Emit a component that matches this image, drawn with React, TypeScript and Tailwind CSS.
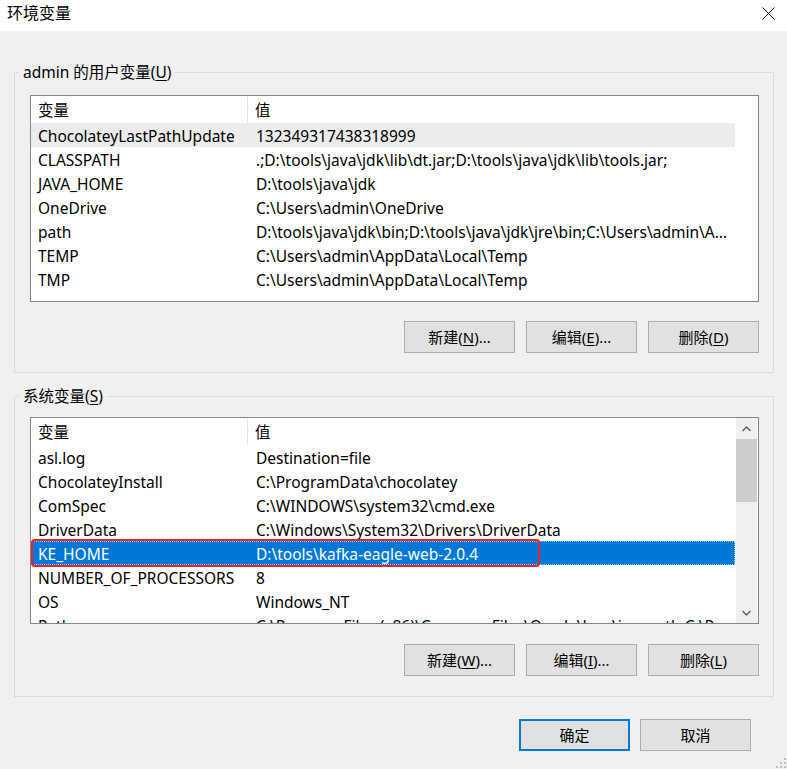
import React from "react";

type Row = { name: string; value: string };

const userVars: Row[] = [
  { name: "ChocolateyLastPathUpdate", value: "132349317438318999" },
  { name: "CLASSPATH", value: ".;D:\\tools\\java\\jdk\\lib\\dt.jar;D:\\tools\\java\\jdk\\lib\\tools.jar;" },
  { name: "JAVA_HOME", value: "D:\\tools\\java\\jdk" },
  { name: "OneDrive", value: "C:\\Users\\admin\\OneDrive" },
  { name: "path", value: "D:\\tools\\java\\jdk\\bin;D:\\tools\\java\\jdk\\jre\\bin;C:\\Users\\admin\\AppData\\Local\\Microsoft\\WindowsApps" },
  { name: "TEMP", value: "C:\\Users\\admin\\AppData\\Local\\Temp" },
  { name: "TMP", value: "C:\\Users\\admin\\AppData\\Local\\Temp" },
];

const sysVars: Row[] = [
  { name: "asl.log", value: "Destination=file" },
  { name: "ChocolateyInstall", value: "C:\\ProgramData\\chocolatey" },
  { name: "ComSpec", value: "C:\\WINDOWS\\system32\\cmd.exe" },
  { name: "DriverData", value: "C:\\Windows\\System32\\Drivers\\DriverData" },
  { name: "KE_HOME", value: "D:\\tools\\kafka-eagle-web-2.0.4" },
  { name: "NUMBER_OF_PROCESSORS", value: "8" },
  { name: "OS", value: "Windows_NT" },
  { name: "Path", value: "C:\\Program Files (x86)\\Common Files\\Oracle\\Java\\javapath;C:\\Program Files" },
];

const Btn = ({ label, keyChar, tail, primary }: { label: string; keyChar?: string; tail?: string; primary?: boolean }) => (
  <button
    className={`w-[111px] h-[32px] bg-[#e1e1e1] text-[15px] text-black flex items-center justify-center ${
      primary ? "border-2 border-[#0078d7]" : "border border-[#adadad]"
    }`}
  >
    {label}
    {keyChar && (
      <>
        (<span className="underline underline-offset-2">{keyChar}</span>){tail}
      </>
    )}
  </button>
);

const Header = () => (
  <div className="flex h-[27px] w-[704px] items-center bg-white">
    <div className="w-[217px] pl-[7px] pt-[2px] border-r border-[#e5e5e5] h-full flex items-center">变量</div>
    <div className="pl-[7px] pt-[2px]">值</div>
  </div>
);

const ListRow = ({ row, hovered, selected }: { row: Row; hovered?: boolean; selected?: boolean }) => (
  <div
    className={`flex h-[24px] w-[704px] items-center pt-[3px] ${
      selected
        ? "bg-[#0078d7] text-white outline-1 outline-dotted outline-offset-[-1px] outline-[#9ccbf0]"
        : hovered
        ? "bg-[#ececec]"
        : ""
    }`}
  >
    <div className="w-[217px] pl-[7px] whitespace-nowrap">{row.name}</div>
    <div className="w-[487px] pl-[8px] pr-[8px] overflow-hidden text-ellipsis whitespace-nowrap">{row.value}</div>
  </div>
);

const Chevron = ({ up }: { up?: boolean }) => (
  <svg width="9" height="6" viewBox="0 0 9 6">
    <path d={up ? "M0.5 5 L4.5 1 L8.5 5" : "M0.5 1 L4.5 5 L8.5 1"} fill="none" stroke="#606060" strokeWidth="1.4" />
  </svg>
);

const App = () => {
  return (
    <div
      className="w-[787px] h-[769px] bg-[#f0f0f0] text-black text-[15.5px] relative overflow-hidden"
      style={{ fontFamily: '"Noto Sans", "Noto Sans CJK SC", sans-serif' }}
    >
      {/* title bar */}
      <div className="h-[31px] bg-white flex items-start justify-between">
        <div className="pl-[7px] pt-[3px] leading-[20px] text-[16px]">环境变量</div>
        <div className="pt-[7px] pr-[12px]">
          <svg width="13" height="13" viewBox="0 0 13 13">
            <path d="M0.5 0.5 L12.5 12.5 M12.5 0.5 L0.5 12.5" stroke="#111" strokeWidth="1" />
          </svg>
        </div>
      </div>

      {/* user vars */}
      <fieldset className="ml-[14px] mt-[32px] w-[760px] border border-[#dcdcdc] pb-[19px]">
        <legend className="ml-[4px] px-[4px] leading-[18px]">
          admin 的用户变量(<span className="underline underline-offset-2">U</span>)
        </legend>
        <div className="ml-[15px] mt-[14px] w-[729px] h-[207px] border border-[#828790] bg-white overflow-hidden">
          <Header />
          {userVars.map((r, i) => (
            <ListRow key={r.name} row={r} hovered={i === 0} />
          ))}
        </div>
        <div className="flex ml-[389px] mt-[19px] gap-[11px]">
          <Btn label="新建" keyChar="N" tail="..." />
          <Btn label="编辑" keyChar="E" tail="..." />
          <Btn label="删除" keyChar="D" />
        </div>
      </fieldset>

      {/* system vars */}
      <fieldset className="ml-[14px] mt-[14px] w-[760px] border border-[#dcdcdc] pb-[20px]">
        <legend className="ml-[4px] px-[4px] leading-[18px]">
          系统变量(<span className="underline underline-offset-2">S</span>)
        </legend>
        <div className="ml-[15px] mt-[12px] w-[729px] h-[207px] border border-[#828790] bg-white flex overflow-hidden">
          <div className="w-[705px] h-full overflow-hidden relative">
            <Header />
            {sysVars.map((r) => (
              <ListRow key={r.name} row={r} selected={r.name === "KE_HOME"} />
            ))}
            <div className="absolute left-[0px] top-[121px] w-[509px] h-[28px] border-[2.5px] border-[#e8222a] rounded-[4px]" />
          </div>
          <div className="w-[21px] h-full bg-[#f0f0f0] flex flex-col">
            <div className="h-[21px] flex items-center justify-center">
              <Chevron up />
            </div>
            <div className="h-[63px] bg-[#cdcdcd]" />
            <div className="flex-1" />
            <div className="h-[21px] flex items-center justify-center">
              <Chevron />
            </div>
          </div>
        </div>
        <div className="flex ml-[389px] mt-[20px] gap-[11px]">
          <Btn label="新建" keyChar="W" tail="..." />
          <Btn label="编辑" keyChar="I" tail="..." />
          <Btn label="删除" keyChar="L" />
        </div>
      </fieldset>

      {/* dialog buttons */}
      <div className="flex ml-[519px] mt-[22px] gap-[10px]">
        <Btn label="确定" primary />
        <Btn label="取消" />
      </div>

      {/* resize grip */}
      <svg className="absolute right-[1px] bottom-[1px]" width="11" height="11" viewBox="0 0 11 11">
        {[
          [9, 1], [9, 5], [5, 5], [9, 9], [5, 9], [1, 9],
        ].map(([x, y]) => (
          <rect key={`${x}-${y}`} x={x} y={y} width="2" height="2" fill="#bdbdbd" />
        ))}
      </svg>
    </div>
  );
};

export default App;
